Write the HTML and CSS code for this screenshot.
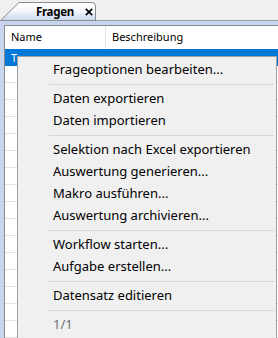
FILE: index.html
```html
<!DOCTYPE html>
<html>
<head>
<meta charset="utf-8">
<link rel="stylesheet" href="styles.css">
</head>
<body>
<div class="screen">
  <div class="tabbar">
    <div class="tab">
      <svg class="tab-shape" width="97" height="21" viewBox="0 0 97 21">
        <defs>
          <linearGradient id="tg" x1="0" y1="0" x2="0" y2="1">
            <stop offset="0" stop-color="#ffffff"/>
            <stop offset="0.45" stop-color="#f4f7fc"/>
            <stop offset="1" stop-color="#c9d8f0"/>
          </linearGradient>
        </defs>
        <path d="M0.5 20.5 L19 2.5 L92 2.5 Q95.5 2.5 95.5 6 L95.5 20.5 Z" fill="url(#tg)" stroke="#8c8c8c" stroke-width="1"/>
      </svg>
      <span class="tab-label">Fragen</span>
      <svg class="tab-close" width="8" height="8" viewBox="0 0 8 8">
        <path d="M0.8 0.8 L7.2 7.2 M7.2 0.8 L0.8 7.2" stroke="#000" stroke-width="1.7" fill="none"/>
      </svg>
    </div>
  </div>
  <div class="frame">
    <div class="panel">
      <div class="grid-head">
        <div class="col col-name">Name</div>
        <div class="col col-desc">Beschreibung</div>
      </div>
      <div class="row selected"><span class="cell">T</span></div>
      <div class="row"></div>
      <div class="row"></div>
      <div class="row"></div>
      <div class="row"></div>
      <div class="row"></div>
      <div class="row"></div>
      <div class="row"></div>
      <div class="row"></div>
      <div class="row"></div>
      <div class="row"></div>
      <div class="row"></div>
      <div class="row"></div>
      <div class="row"></div>
      <div class="row"></div>
      <div class="row"></div>
      <div class="row"></div>
    </div>
  </div>
  <div class="menu">
    <div class="item">Frageoptionen bearbeiten...</div>
    <div class="sep"></div>
    <div class="item">Daten exportieren</div>
    <div class="item">Daten importieren</div>
    <div class="sep"></div>
    <div class="item">Selektion nach Excel exportieren</div>
    <div class="item">Auswertung generieren...</div>
    <div class="item">Makro ausführen...</div>
    <div class="item">Auswertung archivieren...</div>
    <div class="sep"></div>
    <div class="item">Workflow starten...</div>
    <div class="item">Aufgabe erstellen...</div>
    <div class="sep"></div>
    <div class="item">Datensatz editieren</div>
    <div class="sep"></div>
    <div class="item disabled">1/1</div>
  </div>
</div>
</body>
</html>
```
FILE: styles.css
```css
html, body {
  margin: 0;
  padding: 0;
}
body {
  width: 278px;
  height: 338px;
  overflow: hidden;
  background: #f0f0f0;
  font-family: "Noto Sans", "Open Sans", sans-serif;
  font-size: 12px;
  color: #000;
}
.screen {
  position: relative;
  width: 278px;
  height: 338px;
  display: flex;
  flex-direction: column;
}
.tabbar {
  height: 20px;
  border-bottom: 1px solid #a0a0a0;
  display: flex;
  align-items: flex-end;
  background: #f0f0f0;
}
.tab {
  position: relative;
  width: 97px;
  height: 21px;
  margin-bottom: -1px;
  display: flex;
  align-items: center;
  padding-top: 2px;
  box-sizing: border-box;
}
.tab-shape {
  position: absolute;
  left: 0;
  top: 0;
}
.tab-label {
  position: relative;
  margin-left: 36px;
  font-weight: bold;
  font-size: 11.5px;
  letter-spacing: -0.3px;
  line-height: 16px;
}
.tab-close {
  position: relative;
  margin-left: 11px;
  margin-top: 1px;
}
.frame {
  flex: 1;
  background: #c7d6ee;
  padding: 4px 0 0 4px;
  display: flex;
  flex-direction: column;
}
.panel {
  flex: 1;
  background: #fff;
  border-left: 1px solid #8a8a8a;
  border-top: 1px solid #8a8a8a;
  overflow: hidden;
}
.grid-head {
  height: 23px;
  display: flex;
  align-items: center;
}
.col {
  height: 23px;
  line-height: 22px;
  font-size: 11px;
}
.col-name {
  width: 101px;
  padding-left: 6px;
  box-sizing: border-box;
  border-right: 1px solid #e5e5e5;
}
.col-desc {
  padding-left: 6px;
}
.row {
  height: 16px;
  border-bottom: 1px solid #e3e3e3;
}
.row.selected {
  background: #0078d7;
  color: #fff;
  border-bottom: 1px solid #0078d7;
}
.cell {
  padding-left: 6px;
  line-height: 16px;
  font-size: 11px;
}
.menu {
  position: absolute;
  left: 17px;
  top: 56px;
  width: 258px;
  height: 280px;
  background: #f0f0f0;
  border: 1px solid #a0a0a0;
  padding: 2px 0;
  box-sizing: content-box;
}
.item {
  height: 22px;
  line-height: 21px;
  padding-left: 35px;
  font-size: 13px;
  white-space: nowrap;
}
.item.disabled {
  color: #6d6d6d;
}
.sep {
  height: 1px;
  background: #d7d7d7;
  margin: 3px 2px 3px 31px;
}
```
